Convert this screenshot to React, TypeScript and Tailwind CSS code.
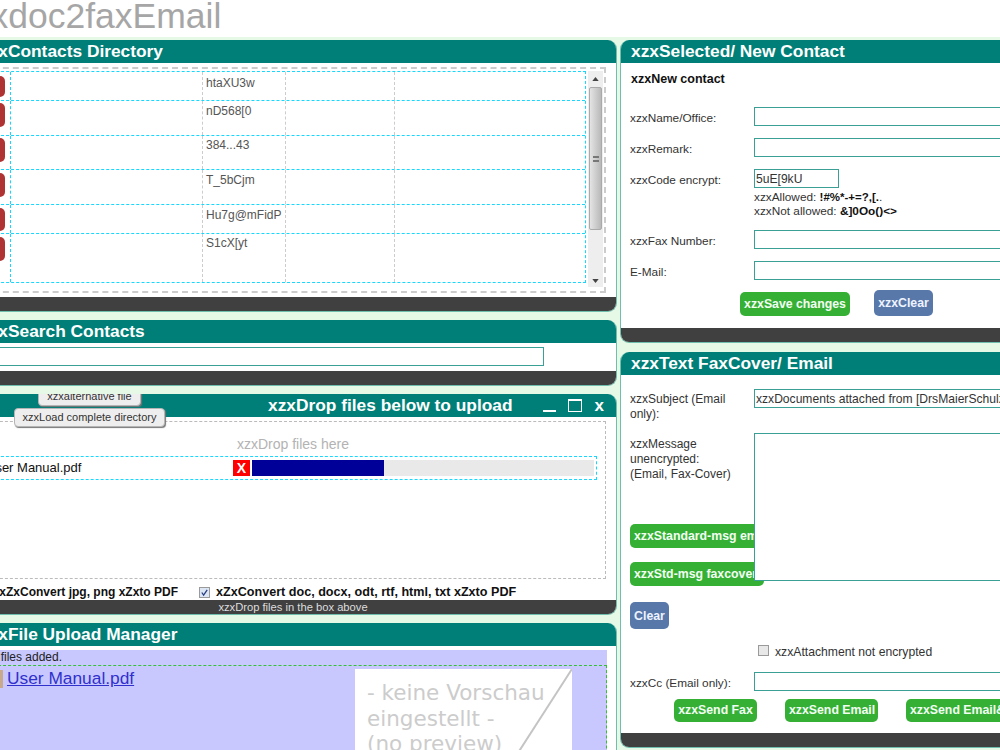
import React from "react";

const font = "font-['Liberation_Sans',Arial,sans-serif]";

function Panel({ title, titleNode, footer, footerH = "h-[14px]", children, className = "" }: { title?: string; titleNode?: React.ReactNode; footer?: React.ReactNode; footerH?: string; children: React.ReactNode; className?: string }) {
  return (
    <section className={`relative flex flex-col overflow-hidden rounded-[9px] border border-t-0 border-[#70bfae] bg-white ${className}`}>
      <h2 className="h-[23px] shrink-0 bg-[#007f78] pl-[10px] text-[17.33px] font-bold leading-[23px] text-white">{titleNode ?? title}</h2>
      <div className="min-h-0 flex-1">{children}</div>
      {footerH !== "none" && <div className={`${footerH} shrink-0 bg-[#404040] text-center text-[11.2px] leading-[14px] text-[#dddddd]`}>{footer}</div>}
    </section>
  );
}

const GBtn = ({ children, className = "" }: { children: React.ReactNode; className?: string }) => (
  <button className={`block whitespace-nowrap rounded-[5px] bg-[#35b035] px-[4px] text-[12.3px] font-bold text-[#f2fff2] ${className}`}>{children}</button>
);
const BBtn = ({ children, className = "" }: { children: React.ReactNode; className?: string }) => (
  <button className={`block whitespace-nowrap rounded-[5px] bg-[#5878aa] px-[4px] text-[12.3px] font-bold leading-[26px] text-[#eef3ff] ${className}`}>{children}</button>
);
const Inp = ({ value = "", className = "" }: { value?: string; className?: string }) => (
  <input readOnly value={value} className={`h-[19px] border border-[#3a9f94] bg-white pl-[1px] text-[12.1px] leading-[17px] text-[#333] outline-none ${className}`} />
);
const Row = ({ label, children, className = "" }: { label: string; children: React.ReactNode; className?: string }) => (
  <div className={`flex h-[19px] items-center ${className}`}>
    <label className="w-[124px] shrink-0 pt-[3px] text-[11.8px] leading-[14px] text-[#333]">{label}</label>
    {children}
  </div>
);

const rows = [
  { h: "h-[29px]", bt: "h-[21px] mt-[4px]", t: "htaXU3w", pt: "pt-[4px]" },
  { h: "h-[35px]", bt: "h-[24px] mt-[2px]", t: "nD568[0", pt: "pt-[3px]" },
  { h: "h-[34px]", bt: "h-[24px] mt-[2px]", t: "384...43", pt: "pt-[2px]" },
  { h: "h-[35px]", bt: "h-[24px] mt-[3px]", t: "T_5bCjm", pt: "pt-[3px]" },
  { h: "h-[29px]", bt: "h-[23px] mt-[3px]", t: "Hu7g@mFidP", pt: "pt-[3px]" },
  { h: "h-[48px]", bt: "h-[24px] mt-[3px]", t: "S1cX[yt", pt: "pt-[2px]" },
];

function Check({ on }: { on?: boolean }) {
  return (
    <span className={`flex h-[11px] w-[11px] shrink-0 items-center justify-center border border-[#9a9a9a] ${on ? "bg-[#dce6f5]" : "bg-[#e8e8e8]"}`}>
      {on && (
        <svg viewBox="0 0 10 10" className="h-[9px] w-[9px]"><path d="M2 5l2 3 4-6" fill="none" stroke="#2a3f80" strokeWidth="1.4" /></svg>
      )}
    </span>
  );
}

function Scrollbar() {
  return (
    <div className="flex h-[216px] w-[15px] shrink-0 flex-col items-center bg-[#eeeeee]">
      <svg viewBox="0 0 8 5" className="mt-[6px] h-[4px] w-[7px]"><path d="M4 0l4 5H0z" fill="#444" /></svg>
      <div className="mt-[6px] flex h-[143px] w-[13px] items-center justify-center rounded-[2px] border border-[#aaaaaa] bg-gradient-to-r from-[#e4e4e4] to-[#b9b9b9]">
        <div className="h-[6px] w-[6px] border-y-2 border-[#777]" />
      </div>
      <svg viewBox="0 0 8 5" className="mt-auto mb-[4px] h-[4px] w-[7px]"><path d="M4 5l4-5H0z" fill="#444" /></svg>
    </div>
  );
}

export default function App() {
  return (
    <div className={`${font} h-[750px] w-[1000px] overflow-hidden bg-[#e6f9e6]`}>
      <header className="h-[37px] overflow-hidden bg-white">
        <h1 className="-mt-[2px] ml-[-45px] whitespace-nowrap text-[35.5px] font-normal leading-[36px] text-[#a6a6a6]">xzxdoc2faxEmail</h1>
      </header>
      <div className="ml-[-31px] flex w-[1299px] items-start gap-[3px] pt-[3px]">
        {/* left column */}
        <div className="flex w-[648px] shrink-0 flex-col gap-[8px]">
          <Panel title="xzxContacts Directory" className="h-[272px]">
            <div className="ml-[3px] mr-[10px] mt-[4px] flex h-[226px] gap-[2px] border-2 border-dashed border-[#cccccc] pt-[2px] pl-[1px] pr-[1px]">
              <div className="h-[212px] flex-1 border border-l-0 border-dashed border-[#14d8ff]">
                {rows.map((r, i) => (
                  <div key={i} className={`flex ${r.h} ${i < 5 ? "border-b border-dashed border-[#14d8ff]" : ""} box-border`}>
                    <div className="w-[35px] shrink-0 border-r border-dashed border-[#14d8ff]">
                      <div className={`ml-[2px] w-[27px] rounded-[5px] bg-[#b03333] ${r.bt}`} />
                    </div>
                    <div className="w-[192px] shrink-0 border-r border-dashed border-[#cccccc]" />
                    <div className={`w-[83px] shrink-0 whitespace-nowrap border-r border-dashed border-[#cccccc] pl-[3px] text-[12px] leading-[15px] text-[#555555] ${r.pt}`}>{r.t}</div>
                    <div className="w-[109px] shrink-0 border-r border-dashed border-[#cccccc]" />
                    <div className="flex-1" />
                  </div>
                ))}
              </div>
              <Scrollbar />
            </div>
          </Panel>

          <Panel title="xzxSearch Contacts" className="h-[66px]">
            <Inp className="ml-[8px] mt-[4px] block w-[566px]" />
          </Panel>

          <Panel
            className="h-[221px]"
            titleNode={
              <div className="flex h-[23px] items-center">
                <span className="ml-[288px] whitespace-nowrap">xzxDrop files below to upload</span>
                <span className="ml-[30px] mt-[10px] h-[2px] w-[13px] bg-white" />
                <span className="ml-[12px] h-[13px] w-[14px] border border-t-2 border-white" />
                <span className="ml-[13px] text-[17px]">x</span>
              </div>
            }
            footer="xzxDrop files in the box above"
          >
            <button className="absolute left-[68px] top-[-7px] h-[19px] w-[103px] rounded-[4px] border border-[#b5b5b5] bg-[#eeeeee] text-[11px] leading-[17px] text-[#333] shadow-[1px_1px_1px_#777]">xzxalternative file</button>
            <button className="absolute left-[44px] top-[14px] h-[19px] w-[151px] rounded-[4px] border border-[#b5b5b5] bg-[#eeeeee] text-[11px] leading-[17px] text-[#333] shadow-[1px_1px_1px_#777]">xzxLoad complete directory</button>
            <div className="ml-[10px] mr-[10px] mt-[4px] h-[158px] border border-dashed border-[#bbbbbb]">
              <p className="mt-[14px] text-center text-[14px] leading-[17px] text-[#b3b3b3]">xzxDrop files here</p>
              <div className="mr-[8px] mt-[3px] flex h-[24px] items-center border border-l-0 border-dashed border-[#14d8ff] pr-[2px]">
                <span className="ml-[5px] w-[247px] shrink-0 whitespace-nowrap text-[13px] text-[#111]">User Manual.pdf</span>
                <span className="flex h-[16px] w-[17px] shrink-0 items-center justify-center bg-[#ff0000] text-[14px] font-bold text-white">X</span>
                <div className="ml-[2px] h-[16px] flex-1 bg-[#e9e9e9]">
                  <div className="h-[16px] w-[132px] bg-[#000099]" />
                </div>
              </div>
            </div>
            <div className="mt-[6px] flex h-[15px] items-center text-[12px] font-bold leading-[15px] text-[#111]">
              <span className="w-[208px] shrink-0 whitespace-nowrap text-right">xZxConvert jpg, png xZxto PDF</span>
              <span className="ml-[21px]"><Check on /></span>
              <span className="ml-[6px] whitespace-nowrap text-[12.6px]">xZxConvert doc, docx, odt, rtf, html, txt xZxto PDF</span>
            </div>
          </Panel>

          <Panel title="xzxFile Upload Manager" className="h-[300px]" footerH="none">
            <div className="ml-[3px] mr-[9px] mt-[4px] h-[260px] bg-[#c8c8ff]">
              <p className="-ml-[9px] h-[15px] text-[12px] leading-[15px] text-[#222]">xzxNo files added.</p>
              <div className="flex border-t border-r border-dashed border-[#33c033] pt-[3px]">
                <span className="ml-[26px] mt-[1px] h-[18px] w-[4px] shrink-0 bg-[#c9a98c]" />
                <a href="#" className="ml-[4px] mt-[-2px] text-[17.33px] leading-[22px] text-[#3030cc] underline">User Manual.pdf</a>
                <div className="relative ml-auto mr-[34px] h-[150px] w-[217px] overflow-hidden bg-white pl-[12px] pt-[11px] text-[24px] leading-[25.5px] text-[#cccccc]">
                  <svg viewBox="0 0 217 150" className="absolute left-0 top-0 h-[150px] w-[217px]"><path d="M217 0L114 160" stroke="#c4c4c4" strokeWidth="2" fill="none" /></svg>
                  <p className="whitespace-nowrap font-['DejaVu_Sans',sans-serif] text-[21.5px]">- keine Vorschau</p>
                  <p className="whitespace-nowrap font-['DejaVu_Sans',sans-serif] text-[21.5px]">eingestellt -</p>
                  <p className="whitespace-nowrap font-['DejaVu_Sans',sans-serif] text-[21.5px]">(no preview)</p>
                </div>
              </div>
            </div>
          </Panel>
        </div>

        {/* right column */}
        <div className="flex w-[648px] shrink-0 flex-col gap-[9px]">
          <Panel title="xzxSelected/ New Contact" className="h-[303px]">
            <div className="pl-[9px]">
              <p className="pl-[1px] pt-[9px] text-[12.5px] font-bold leading-[15px] text-[#111]">xzxNew contact</p>
              <Row label="xzxName/Office:" className="mt-[20px]"><Inp className="w-[600px]" /></Row>
              <Row label="xzxRemark:" className="mt-[12px]"><Inp className="w-[600px]" /></Row>
              <Row label="xzxCode encrypt:" className="mt-[12px]"><Inp value="5uE[9kU" className="w-[85px]" /></Row>
              <div className="ml-[124px] mt-[2px] h-[28px] text-[11.8px] leading-[14px] text-[#333]">
                <p>xzxAllowed: <b className="text-[11.5px] text-[#111]">!#%*-+=?,[.</b>.</p>
                <p>xzxNot allowed: <b className="text-[#111]">&amp;]0Oo()&lt;&gt;</b></p>
              </div>
              <Row label="xzxFax Number:" className="mt-[12px]"><Inp className="w-[600px]" /></Row>
              <Row label="E-Mail:" className="mt-[12px]"><Inp className="w-[600px]" /></Row>
              <div className="ml-[110px] mt-[10px] flex items-end gap-[24px]">
                <GBtn className="h-[24px] w-[110px] text-center leading-[24px]">xzxSave changes</GBtn>
                <BBtn className="h-[26px] w-[59px]">xzxClear</BBtn>
              </div>
            </div>
          </Panel>

          <Panel title="xzxText FaxCover/ Email" className="h-[396px]">
            <div className="pl-[9px] pt-[14px]">
              <div className="flex h-[44px] items-start">
                <label className="w-[124px] shrink-0 pt-[3px] text-[12px] leading-[15px] text-[#333]">xzxSubject (Email only):</label>
                <Inp value="xzxDocuments attached from [DrsMaierSchulz]" className="w-[600px]" />
              </div>
              <div className="flex items-start">
                <div className="w-[124px] shrink-0">
                  <label className="block h-[49px] pt-[4px] text-[12px] leading-[15px] text-[#333]">xzxMessage<br />unencrypted:<br />(Email, Fax-Cover)</label>
                  <GBtn className="mt-[42px] h-[24px] w-max leading-[24px]">xzxStandard-msg email</GBtn>
                  <GBtn className="mt-[14px] h-[24px] w-[134px] text-left leading-[24px]">xzxStd-msg faxcover</GBtn>
                  <BBtn className="mt-[16px] h-[27px] w-[39px]">Clear</BBtn>
                </div>
                <textarea readOnly className="relative z-10 h-[148px] w-[600px] resize-none border border-[#3a9f94] bg-white outline-none" />
              </div>
              <div className="ml-[124px] mt-[16px] flex h-[11px] items-center text-[12.2px] text-[#333]">
                <span className="ml-[4px]"><Check /></span>
                <span className="ml-[6px] pt-[3px]">xzxAttachment not encrypted</span>
              </div>
              <Row label="xzxCc (Email only):" className="mt-[16px]"><Inp className="w-[600px]" /></Row>
              <div className="ml-[44px] mt-[8px] flex gap-[28px]">
                <GBtn className="h-[23px] w-[83px] text-center leading-[23px]">xzxSend Fax</GBtn>
                <GBtn className="h-[23px] w-[93px] text-center leading-[23px]">xzxSend Email</GBtn>
                <GBtn className="h-[23px] w-max leading-[23px]">xzxSend Email&amp;Fax</GBtn>
              </div>
            </div>
          </Panel>
        </div>
      </div>
    </div>
  );
}
